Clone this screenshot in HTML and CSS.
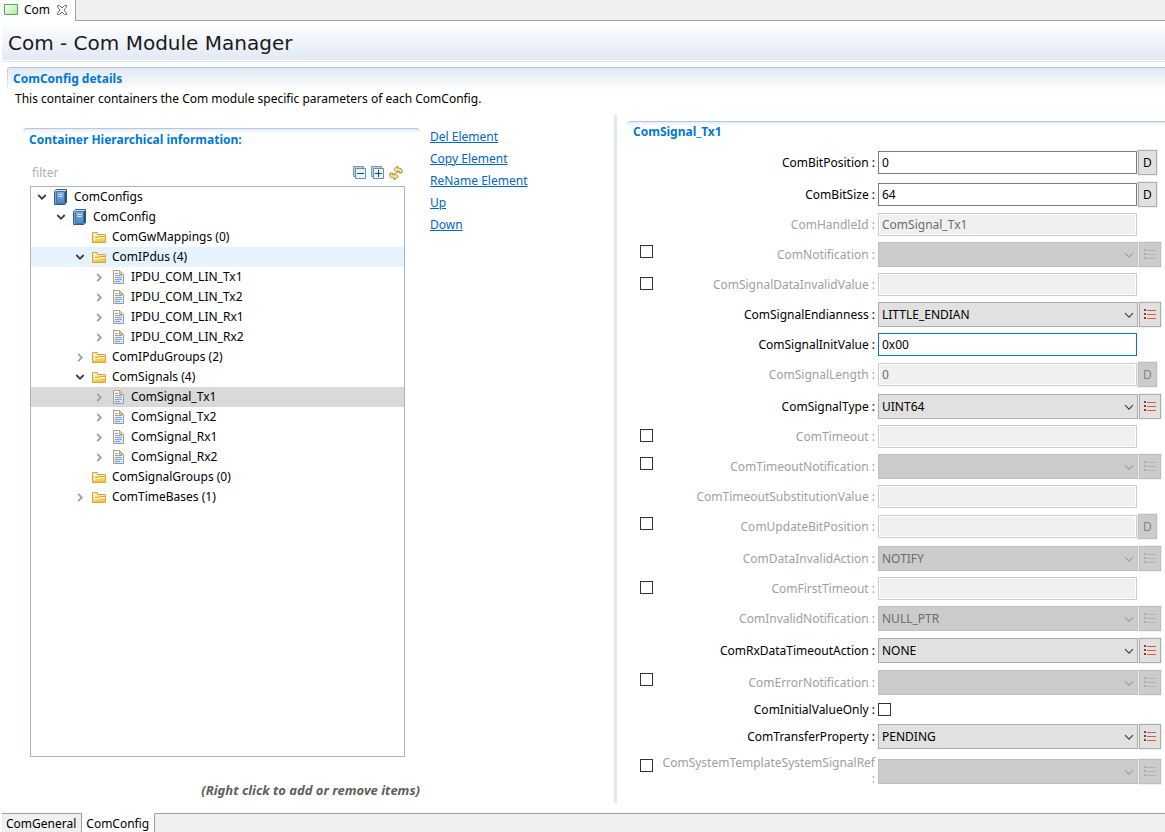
FILE: index.html
```html
<!DOCTYPE html>
<html lang="en">
<head>
<meta charset="utf-8">
<title>Com</title>
<link rel="stylesheet" href="styles.css">
</head>
<body>
<svg class="sprite" aria-hidden="true">
  <defs>
    <linearGradient id="g-book" x1="0" y1="0" x2="0" y2="1"><stop offset="0" stop-color="#86b0d8"/><stop offset="1" stop-color="#4b86bf"/></linearGradient>
    <linearGradient id="g-folder" x1="0" y1="0" x2="0" y2="1"><stop offset="0" stop-color="#fff6cf"/><stop offset="1" stop-color="#f5c020"/></linearGradient>
    <linearGradient id="g-file" x1="0" y1="0" x2="0" y2="1"><stop offset="0" stop-color="#ffffff"/><stop offset="1" stop-color="#d3e1f5"/></linearGradient>
    <linearGradient id="g-green" x1="0" y1="0" x2="1" y2="1"><stop offset="0" stop-color="#ffffff"/><stop offset="1" stop-color="#a9e89a"/></linearGradient>
  </defs>
  <symbol id="i-open" viewBox="0 0 10 16"><path d="M1.3 6 5 9.7 8.7 6" fill="none" stroke="#404040" stroke-width="1.8"/></symbol>
  <symbol id="i-closed" viewBox="0 0 10 16"><path d="M3.2 4.8 6.800 8.5 3.2 12.2" fill="none" stroke="#a0a0a0" stroke-width="1.8"/></symbol>
  <symbol id="i-book" viewBox="0 0 16 16"><path d="M3.500.5h10v13l-1.500 2H1.500v-13z" fill="#cfe0f0" stroke="#2c5f94"/><path d="M3.500 2.500h8v12h-8z" fill="url(#g-book)" stroke="#3d74ab"/><path d="M2 3h1v12H2z" fill="#7ba7d0"/><path d="M5.500 5.500h4M5.500 7.500h4" stroke="#d5e6f5"/><path d="M12.500 2v12" stroke="#1e4a78"/></symbol>
  <symbol id="i-folder" viewBox="0 0 16 16"><path d="M1.500 13.500v-10h5v2h8v8z" fill="url(#g-folder)" stroke="#d8a24a"/><path d="M3 8.500h4l1-1h6" fill="none" stroke="#dba245"/><path d="M3.500 12V5.500h2M4 9.500h4l1-1h5" fill="none" stroke="#fffbe8"/></symbol>
  <symbol id="i-file" viewBox="0 0 16 16"><path d="M3.500 1.500h6l4 4v9h-10z" fill="url(#g-file)" stroke="#8e9cb8"/><path d="M3.500 14V1.500h6" fill="none" stroke="#b5a668"/><path d="M9.500 1.500v4h4z" fill="#dfc377" stroke="#c9ac62"/><path d="M5 4.500h3M5 6.500h7M5 8.500h7M5 10.500h7M5 12.500h5" stroke="#85a3d8"/></symbol>
  <symbol id="i-chev" viewBox="0 0 10 10"><path d="M1 3.200 5 7.200 9 3.200" fill="none" stroke="currentColor" stroke-width="1.200"/></symbol>
  <symbol id="i-list" viewBox="0 0 14 15"><path d="M1 2h2v2H1zM1 6h2v2H1zM1 10h2v2H1z" fill="var(--dot)"/><path d="M4 3.500h9M4 7.500h9M4 11.500h9" stroke="var(--bar)"/></symbol>
  <symbol id="i-minus" viewBox="0 0 14 14"><path d="M.5.5h10v10H.5z" fill="#b8d4e6" stroke="#7796ae"/><path d="M2.500 2.500h10v10h-10z" fill="#e6f3fb" stroke="#6c8ca6"/><path d="M4 7.500h7" stroke="#0a4a86"/></symbol>
  <symbol id="i-plus" viewBox="0 0 14 14"><path d="M.5.5h10v10H.5z" fill="#b8d4e6" stroke="#7796ae"/><path d="M2.500 2.500h10v10h-10z" fill="#e6f3fb" stroke="#6c8ca6"/><path d="M4 7.500h7M7.500 4v7" stroke="#0a4a86"/></symbol>
  <symbol id="i-sync" viewBox="1 0 14 16"><path d="M6 4.500 9.500 1v2c2 0 3.500.5 4.500 1.500v3.500h-2.500V6.500l-2-.3V8z" fill="#fbe2a0" stroke="#b98425"/><path d="M10 11.500 6.500 15v-2C4.500 13 3 12.500 2 11.500V8h2.500v1.500l2 .3V8z" fill="#fbe2a0" stroke="#b98425"/></symbol>
</svg>

<nav class="editor-tabs">
  <div class="editor-tab">
    <svg width="14" height="12" viewBox="0 0 14 12" aria-hidden="true"><path d="M.5.500h13v10H.5z" fill="url(#g-green)" stroke="#5aa64a"/></svg>
    <span>Com</span>
    <button class="icon-btn" aria-label="Close"><svg width="12" height="12" viewBox="0 0 12 12"><path d="M1.500 1.500h2L6 4l2.500-2.500h2v1.500L8 6l2.500 3v1.500h-2L6 8l-2.500 2.500h-2V9L4 6 1.500 3z" fill="#fff" stroke="#707070"/></svg></button>
  </div>
  <div class="tab-fill"></div>
</nav>

<header class="page-head"><h1>Com - Com Module Manager</h1></header>

<main class="page">
  <section class="details">
    <h2>ComConfig details</h2>
    <p>This container containers the Com module specific parameters of each ComConfig.</p>
  </section>

  <div class="split">
    <div class="master">
      <section class="hier">
        <h2>Container Hierarchical information:</h2>
        <div class="filter-row">
          <input class="filter" type="text" placeholder="filter" aria-label="filter">
          <button class="icon-btn" aria-label="Collapse all"><svg width="14" height="14"><use href="#i-minus"/></svg></button>
          <button class="icon-btn" aria-label="Expand all"><svg width="14" height="14"><use href="#i-plus"/></svg></button>
          <button class="icon-btn" aria-label="Refresh"><svg width="14" height="16"><use href="#i-sync"/></svg></button>
        </div>
        <ul class="tree" role="tree">
          <li class="l1"><svg class="tw"><use href="#i-open"/></svg><svg class="ic"><use href="#i-book"/></svg>ComConfigs</li>
          <li class="l2"><svg class="tw"><use href="#i-open"/></svg><svg class="ic"><use href="#i-book"/></svg>ComConfig</li>
          <li class="l3"><svg class="tw"></svg><svg class="ic"><use href="#i-folder"/></svg>ComGwMappings (0)</li>
          <li class="l3 hover"><svg class="tw"><use href="#i-open"/></svg><svg class="ic"><use href="#i-folder"/></svg>ComIPdus (4)</li>
          <li class="l4"><svg class="tw"><use href="#i-closed"/></svg><svg class="ic"><use href="#i-file"/></svg>IPDU_COM_LIN_Tx1</li>
          <li class="l4"><svg class="tw"><use href="#i-closed"/></svg><svg class="ic"><use href="#i-file"/></svg>IPDU_COM_LIN_Tx2</li>
          <li class="l4"><svg class="tw"><use href="#i-closed"/></svg><svg class="ic"><use href="#i-file"/></svg>IPDU_COM_LIN_Rx1</li>
          <li class="l4"><svg class="tw"><use href="#i-closed"/></svg><svg class="ic"><use href="#i-file"/></svg>IPDU_COM_LIN_Rx2</li>
          <li class="l3"><svg class="tw"><use href="#i-closed"/></svg><svg class="ic"><use href="#i-folder"/></svg>ComIPduGroups (2)</li>
          <li class="l3"><svg class="tw"><use href="#i-open"/></svg><svg class="ic"><use href="#i-folder"/></svg>ComSignals (4)</li>
          <li class="l4 selected"><svg class="tw"><use href="#i-closed"/></svg><svg class="ic"><use href="#i-file"/></svg>ComSignal_Tx1</li>
          <li class="l4"><svg class="tw"><use href="#i-closed"/></svg><svg class="ic"><use href="#i-file"/></svg>ComSignal_Tx2</li>
          <li class="l4"><svg class="tw"><use href="#i-closed"/></svg><svg class="ic"><use href="#i-file"/></svg>ComSignal_Rx1</li>
          <li class="l4"><svg class="tw"><use href="#i-closed"/></svg><svg class="ic"><use href="#i-file"/></svg>ComSignal_Rx2</li>
          <li class="l3"><svg class="tw"></svg><svg class="ic"><use href="#i-folder"/></svg>ComSignalGroups (0)</li>
          <li class="l3"><svg class="tw"><use href="#i-closed"/></svg><svg class="ic"><use href="#i-folder"/></svg>ComTimeBases (1)</li>
        </ul>
        <p class="hint">(Right click to add or remove items)</p>
      </section>
      <nav class="links">
        <a href="#">Del Element</a>
        <a href="#">Copy Element</a>
        <a href="#">ReName Element</a>
        <a href="#">Up</a>
        <a href="#">Down</a>
      </nav>
    </div>

    <section class="signal">
      <h2>ComSignal_Tx1</h2>
      <form class="form">
        <div class="row"><label for="f1">ComBitPosition :</label><div class="ctl tall"><input id="f1" type="text" value="0"><button type="button" class="d">D</button></div></div>
        <div class="row"><label for="f2">ComBitSize :</label><div class="ctl tall"><input id="f2" type="text" value="64"><button type="button" class="d">D</button></div></div>
        <div class="row off"><label for="f3">ComHandleId :</label><div class="ctl"><input id="f3" type="text" value="ComSignal_Tx1" disabled></div></div>
        <div class="row off"><input type="checkbox" aria-label="Enable ComNotification"><label for="f4">ComNotification :</label><div class="ctl tall"><span class="sel"><select id="f4" disabled><option></option></select><svg><use href="#i-chev"/></svg></span><button type="button" class="list" aria-label="List" disabled><svg><use href="#i-list"/></svg></button></div></div>
        <div class="row off"><input type="checkbox" aria-label="Enable ComSignalDataInvalidValue"><label for="f5">ComSignalDataInvalidValue :</label><div class="ctl"><input id="f5" type="text" disabled></div></div>
        <div class="row"><label for="f6">ComSignalEndianness :</label><div class="ctl tall"><span class="sel"><select id="f6"><option>LITTLE_ENDIAN</option></select><svg><use href="#i-chev"/></svg></span><button type="button" class="list" aria-label="List"><svg><use href="#i-list"/></svg></button></div></div>
        <div class="row"><label for="f7">ComSignalInitValue :</label><div class="ctl"><input id="f7" class="active" type="text" value="0x00"></div></div>
        <div class="row off"><label for="f8">ComSignalLength :</label><div class="ctl tall"><input id="f8" type="text" value="0" disabled><button type="button" class="d" disabled>D</button></div></div>
        <div class="row"><label for="f9">ComSignalType :</label><div class="ctl tall"><span class="sel"><select id="f9"><option>UINT64</option></select><svg><use href="#i-chev"/></svg></span><button type="button" class="list" aria-label="List"><svg><use href="#i-list"/></svg></button></div></div>
        <div class="row off"><input type="checkbox" aria-label="Enable ComTimeout"><label for="f10">ComTimeout :</label><div class="ctl"><input id="f10" type="text" disabled></div></div>
        <div class="row off"><input type="checkbox" aria-label="Enable ComTimeoutNotification"><label for="f11">ComTimeoutNotification :</label><div class="ctl tall"><span class="sel"><select id="f11" disabled><option></option></select><svg><use href="#i-chev"/></svg></span><button type="button" class="list" aria-label="List" disabled><svg><use href="#i-list"/></svg></button></div></div>
        <div class="row off"><label for="f12">ComTimeoutSubstitutionValue :</label><div class="ctl"><input id="f12" type="text" disabled></div></div>
        <div class="row off"><input type="checkbox" aria-label="Enable ComUpdateBitPosition"><label for="f13">ComUpdateBitPosition :</label><div class="ctl tall"><input id="f13" type="text" disabled><button type="button" class="d" disabled>D</button></div></div>
        <div class="row off"><label for="f14">ComDataInvalidAction :</label><div class="ctl tall"><span class="sel"><select id="f14" disabled><option>NOTIFY</option></select><svg><use href="#i-chev"/></svg></span><button type="button" class="list" aria-label="List" disabled><svg><use href="#i-list"/></svg></button></div></div>
        <div class="row off"><input type="checkbox" aria-label="Enable ComFirstTimeout"><label for="f15">ComFirstTimeout :</label><div class="ctl"><input id="f15" type="text" disabled></div></div>
        <div class="row off"><label for="f16">ComInvalidNotification :</label><div class="ctl tall"><span class="sel"><select id="f16" disabled><option>NULL_PTR</option></select><svg><use href="#i-chev"/></svg></span><button type="button" class="list" aria-label="List" disabled><svg><use href="#i-list"/></svg></button></div></div>
        <div class="row"><label for="f17">ComRxDataTimeoutAction :</label><div class="ctl tall"><span class="sel"><select id="f17"><option>NONE</option></select><svg><use href="#i-chev"/></svg></span><button type="button" class="list" aria-label="List"><svg><use href="#i-list"/></svg></button></div></div>
        <div class="row off"><input type="checkbox" aria-label="Enable ComErrorNotification"><label for="f18">ComErrorNotification :</label><div class="ctl tall"><span class="sel"><select id="f18" disabled><option></option></select><svg><use href="#i-chev"/></svg></span><button type="button" class="list" aria-label="List" disabled><svg><use href="#i-list"/></svg></button></div></div>
        <div class="row"><label for="f19">ComInitialValueOnly :</label><div class="ctl"><input id="f19" type="checkbox"></div></div>
        <div class="row"><label for="f20">ComTransferProperty :</label><div class="ctl tall"><span class="sel"><select id="f20"><option>PENDING</option></select><svg><use href="#i-chev"/></svg></span><button type="button" class="list" aria-label="List"><svg><use href="#i-list"/></svg></button></div></div>
        <div class="row off"><input type="checkbox" aria-label="Enable ComSystemTemplateSystemSignalRef"><label for="f21">ComSystemTemplateSystemSignalRef<br>:</label><div class="ctl tall"><span class="sel"><select id="f21" disabled><option></option></select><svg><use href="#i-chev"/></svg></span><button type="button" class="list" aria-label="List" disabled><svg><use href="#i-list"/></svg></button></div></div>
      </form>
    </section>
  </div>
</main>

<footer class="page-tabs">
  <button class="ptab">ComGeneral</button>
  <button class="ptab current">ComConfig</button>
  <div class="ptab-fill"></div>
</footer>
</body>
</html>
```
FILE: styles.css
```css
* { box-sizing: border-box; }

body {
  margin: 0;
  min-height: 100vh;
  display: flex;
  flex-direction: column;
  background: #fff;
  color: #000;
  font: 12px/16px "Noto Sans", "Open Sans", sans-serif;
}

button, input, select { font: inherit; color: inherit; margin: 0; }
h1, h2, p, ul { margin: 0; padding: 0; }

.sprite { position: absolute; width: 0; height: 0; }

.icon-btn { display: flex; padding: 0; border: 0; background: none; }

.editor-tabs { display: flex; height: 21px; }
.editor-tab {
  display: flex;
  align-items: center;
  gap: 6px;
  padding: 0 7px 2px 4px;
  border-right: 1px solid #a0a0a0;
}
.tab-fill { flex: 1; background: #f0f0f0; border-bottom: 1px solid #a0a0a0; }

.page-head {
  height: 41px;
  margin-left: 2px;
  padding: 8px 6px;
  background: linear-gradient(#fff, #e1e9f4);
  border-bottom: 1px solid #dfe6ef;
  box-shadow: inset 0 -1px #fff;
}
.page-head h1 { font: 20px/28px "DejaVu Sans", sans-serif; color: #1a1a1a; }

h2 {
  font-size: 12px;
  line-height: 16px;
  font-weight: 700;
  color: #0078d7;
}

.page { flex: 1; display: flex; flex-direction: column; padding: 5px 0 10px; }

.details {
  height: 48px;
  margin-left: 7px;
  padding: 3px 6px;
  border-top: 1px solid #b4c7dc;
  border-top-left-radius: 4px;
  background:
    linear-gradient(#b4c7dc, #fff) 0 0 / 1px 26px no-repeat,
    linear-gradient(#e1e9f4, #fff 22px);
}
.details p { margin: 4px 0 0 2px; }

.split { flex: 1; display: grid; grid-template-columns: 614fr 551fr; }

.master {
  display: flex;
  align-items: flex-start;
  gap: 10px;
  padding: 13px 0 0 23px;
}
.hier {
  width: 397px;
  align-self: stretch;
  display: flex;
  flex-direction: column;
}
.hier h2, .signal h2 {
  padding: 2px 6px 0;
  border-top: 1px solid #b4c7dc;
  border-radius: 4px 4px 0 0;
  background: linear-gradient(#e8eef7, #fff 5px);
}
.hier h2 { padding-top: 3px; }

.filter-row {
  display: flex;
  align-items: center;
  gap: 4px;
  margin: 16px 17px 5px 7px;
  height: 17px;
}
.filter { flex: 1; min-width: 0; border: 0; padding: 0 2px; outline: 0; }
.filter::placeholder { color: #b0b0b0; opacity: 1; }

.tree {
  flex: 1;
  margin: 0 15px 0 7px;
  border: 1px solid #abb5c3;
  list-style: none;
}
.tree li { display: flex; align-items: center; height: 20px; }
.tree .l1 { padding-left: 6px; }
.tree .l2 { padding-left: 25px; }
.tree .l3 { padding-left: 44px; }
.tree .l4 { padding-left: 63px; }
.tree .hover { background: #e5f3ff; }
.tree .selected { background: #d9d9d9; }
.tw { width: 10px; height: 16px; margin-right: 6px; }
.ic { width: 16px; height: 16px; margin-right: 5px; }

.hint {
  margin: 25px 0 5px;
  text-align: right;
  font-size: 13px;
  font-weight: 700;
  font-style: italic;
  color: #606060;
}

.links { display: flex; flex-direction: column; align-items: flex-start; gap: 6px; padding-top: 1px; }
.links a { color: #0066cc; }

.signal {
  display: flex;
  flex-direction: column;
  border-left: 3px solid #dfe9f3;
  padding: 6px 0 0 10px;
}
.signal h2 { border-top-right-radius: 0; }

.form {
  display: flex;
  flex-direction: column;
  gap: 5px;
  padding: 9px 4px 0 13px;
}
.row {
  display: grid;
  grid-template-columns: 13px 219px 1fr;
  column-gap: 3px;
  align-items: center;
}
.row > input { grid-column: 1; align-self: start; margin-top: 4px; }
.row > label { grid-column: 2; text-align: right; white-space: nowrap; }
.row > .ctl { grid-column: 3; grid-row: 1; display: flex; align-items: center; padding-right: 24px; min-height: 17px; }
.row > .ctl.tall { height: 27px; padding-right: 0; }
.off label { color: #a0a0a0; }

input[type="checkbox"] {
  appearance: none;
  width: 13px;
  height: 13px;
  border: 1px solid #333;
  background: #fff;
}

.ctl input[type="text"] {
  flex: 1;
  min-width: 0;
  height: 23px;
  padding: 0 3px;
  border: 1px solid #7a7a7a;
  background: #fff;
  outline: 0;
}
.ctl input[type="text"].active { border-color: #0078d7; }
.ctl input[type="text"]:disabled {
  border-color: #ccc;
  background: #f0f0f0;
  box-shadow: inset 0 0 0 1px #fff;
  color: #6d6d6d;
}

.sel { position: relative; flex: 1; display: flex; color: #404040; }
.sel select {
  flex: 1;
  min-width: 0;
  height: 25px;
  padding: 0 3px;
  appearance: none;
  border: 1px solid #adadad;
  border-radius: 0;
  background: #e1e1e1;
  color: #000;
}
.sel svg { position: absolute; right: 4px; top: 8px; width: 10px; height: 10px; pointer-events: none; }
.sel select:disabled { background: #ccc; border-color: #bfbfbf; color: #6d6d6d; opacity: 1; }
.sel select:disabled + svg { color: #a0a0a0; }

.d, .list {
  --dot: #8c3a2c;
  --bar: #cf6040;
  height: 25px;
  padding: 0;
  border: 1px solid #adadad;
  background: #e1e1e1;
  box-shadow: 0 0 0 1px #f0f0f0;
}
.d { width: 19px; margin: 0 4px 0 1px; }
.list { width: 22px; margin-left: 1px; display: flex; align-items: center; justify-content: center; }
.list svg { width: 14px; height: 15px; }
.d:disabled, .list:disabled {
  --dot: #aaa;
  --bar: #b4b4b4;
  background: #ccc;
  border-color: #bfbfbf;
  color: #838383;
}

.page-tabs { display: flex; height: 19px; margin-left: 2px; }
.ptab {
  border: 0;
  border-top: 1px solid #a0a0a0;
  border-right: 1px solid #a0a0a0;
  padding: 2px 5px 0 4px;
  background: #f0f0f0;
}
.ptab.current { background: #fff; border-top-color: #fff; }
.ptab-fill { flex: 1; background: #f0f0f0; border-top: 1px solid #a0a0a0; }
```
